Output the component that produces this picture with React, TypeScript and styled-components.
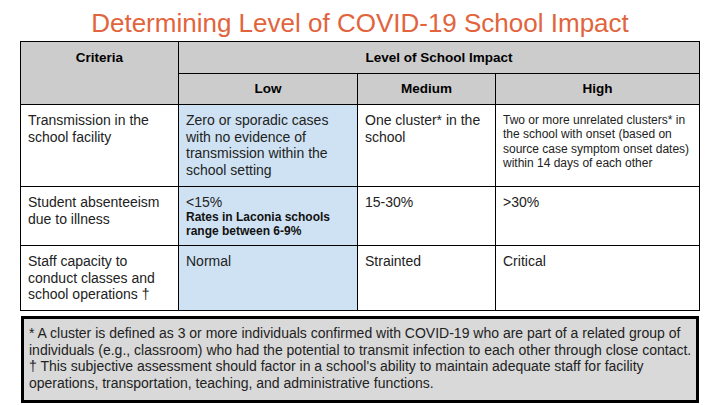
import React from "react";
import styled, { createGlobalStyle } from "styled-components";

const GlobalStyle = createGlobalStyle`
  html, body {
    margin: 0;
    padding: 0;
    background: #ffffff;
  }
  body {
    font-family: "Liberation Sans", Arial, sans-serif;
  }
`;

const Page = styled.div`
  width: 720px;
  height: 405px;
  overflow: hidden;
  display: flex;
  flex-direction: column;
  align-items: flex-start;
`;

const Title = styled.h1`
  align-self: stretch;
  margin: 8px 0 3px;
  font-size: 26px;
  line-height: 30px;
  font-weight: normal;
  color: #e2643c;
  text-align: center;
`;

const ImpactTable = styled.table`
  margin-left: 20px;
  width: 679px;
  table-layout: fixed;
  border-collapse: collapse;
  color: #222;
`;

const HeadCell = styled.th<{ $align?: string }>`
  background: #cccccc;
  border: 1px solid #000;
  font-size: 13.5px;
  line-height: 16px;
  font-weight: bold;
  color: #000;
  text-align: center;
  vertical-align: ${(p) => p.$align || "middle"};
  padding: ${(p) => (p.$align === "top" ? "8px 4px 0" : "0 4px")};
`;

const Cell = styled.td<{ $low?: boolean; $small?: boolean }>`
  border: 1px solid #000;
  background: ${(p) => (p.$low ? "#cfe2f3" : "#ffffff")};
  vertical-align: top;
  padding: ${(p) => (p.$small ? "8px 3px 0 7px" : "7px 7px 0")};
  font-size: ${(p) => (p.$small ? "12px" : "14px")};
  line-height: ${(p) => (p.$small ? "14.3px" : "16.6px")};
`;

const Note = styled.div`
  font-size: 12px;
  line-height: 14.5px;
  font-weight: bold;
  color: #111;
  margin-top: -1px;
`;

const Row = styled.tr<{ $h: number }>`
  height: ${(p) => p.$h}px;
`;

const Footnote = styled.div`
  margin: 5px 0 0 21px;
  width: 678px;
  height: 87px;
  box-sizing: border-box;
  border: 3px solid #000;
  background: #d9d9d9;
  padding: 6px 0 0 5px;
  font-size: 14px;
  line-height: 16.7px;
  color: #222;
`;

const FootLine = styled.p`
  margin: 0;
`;

export default function App() {
  return (
    <Page>
      <GlobalStyle />
      <Title>Determining Level of COVID-19 School Impact</Title>
      <ImpactTable>
        <colgroup>
          <col style={{ width: 158 }} />
          <col style={{ width: 179 }} />
          <col style={{ width: 138 }} />
          <col style={{ width: 204 }} />
        </colgroup>
        <thead>
          <Row $h={32}>
            <HeadCell rowSpan={2} $align="top">Criteria</HeadCell>
            <HeadCell colSpan={3}>Level of School Impact</HeadCell>
          </Row>
          <Row $h={31}>
            <HeadCell>Low</HeadCell>
            <HeadCell>Medium</HeadCell>
            <HeadCell>High</HeadCell>
          </Row>
        </thead>
        <tbody>
          <Row $h={82}>
            <Cell>Transmission in the school facility</Cell>
            <Cell $low>
              Zero or sporadic cases with no evidence of transmission within the
              school setting
            </Cell>
            <Cell>One cluster* in the school</Cell>
            <Cell $small>
              Two or more unrelated clusters* in the school with onset (based on
              source case symptom onset dates) within 14 days of each other
            </Cell>
          </Row>
          <Row $h={59}>
            <Cell>Student absenteeism due to illness</Cell>
            <Cell $low>
              &lt;15%
              <Note>Rates in Laconia schools range between 6-9%</Note>
            </Cell>
            <Cell>15-30%</Cell>
            <Cell>&gt;30%</Cell>
          </Row>
          <Row $h={65}>
            <Cell>Staff capacity to conduct classes and school operations †</Cell>
            <Cell $low>Normal</Cell>
            <Cell>Strainted</Cell>
            <Cell>Critical</Cell>
          </Row>
        </tbody>
      </ImpactTable>
      <Footnote>
        <FootLine>
          * A cluster is defined as 3 or more individuals confirmed with COVID-19
          who are part of a related group of individuals (e.g., classroom) who had
          the potential to transmit infection to each other through close contact.
        </FootLine>
        <FootLine>
          † This subjective assessment should factor in a school's ability to
          maintain adequate staff for facility operations, transportation,
          teaching, and administrative functions.
        </FootLine>
      </Footnote>
    </Page>
  );
}
